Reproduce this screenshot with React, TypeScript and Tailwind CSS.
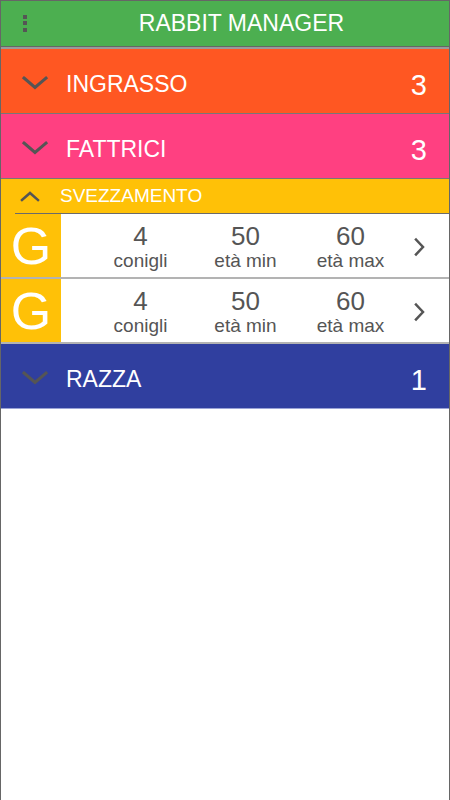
type Section = { title: string; count: number; color: string };

const sections: Section[] = [
  { title: "INGRASSO", count: 3, color: "bg-[#ff5722]" },
  { title: "FATTRICI", count: 3, color: "bg-[#ff4081]" },
];

const rows = [
  { conigli: 4, min: 50, max: 60 },
  { conigli: 4, min: 50, max: 60 },
];

function ChevronDownWide() {
  return (
    <svg width="28" height="16" viewBox="0 0 28 16" fill="none">
      <polyline
        points="3,3 14,12.5 25,3"
        stroke="#555"
        strokeWidth="3"
        strokeLinecap="square"
      />
    </svg>
  );
}

function SectionHeader({ title, count, color }: Section) {
  return (
    <div className={`flex h-[65px] items-center border-b border-[#777] ${color}`}>
      <div className="flex w-[65px] justify-center pl-[3px] pt-[4px]">
        <ChevronDownWide />
      </div>
      <span className="flex-1 pt-[6px] text-[23px] text-white">{title}</span>
      <span className="pr-[22px] pt-[10px] text-[29px] text-white">{count}</span>
    </div>
  );
}

function Stat({ value, label }: { value: number; label: string }) {
  return (
    <div className="flex w-[105px] flex-col items-center leading-none text-[#555]">
      <span className="text-[26px]">{value}</span>
      <span className="mt-[2px] text-[19px]">{label}</span>
    </div>
  );
}

export default function App() {
  return (
    <div
      className="min-h-[800px] border-x border-[#666] bg-white"
      style={{ fontFamily: "'Liberation Sans', Arial, sans-serif" }}
    >
      <div className="flex h-[47px] items-center border-t border-b border-[#666] bg-[#4caf50]">
        <div className="flex w-[48px] flex-col items-center gap-[2.5px] pb-[1px]">
          <span className="h-[4px] w-[4px] bg-[#555]" />
          <span className="h-[4px] w-[4px] bg-[#555]" />
          <span className="h-[4px] w-[4px] bg-[#555]" />
        </div>
        <span className="flex-1 pr-[15px] text-center text-[23px] text-white">
          RABBIT MANAGER
        </span>
      </div>
      <div className="h-[2px] bg-[#9a9a9a]" />

      {sections.map((s) => (
        <SectionHeader key={s.title} {...s} />
      ))}

      <div className="flex h-[34px] items-center bg-[#ffc107]">
        <div className="flex w-[59px] justify-center pr-[2px]">
          <svg width="22" height="12" viewBox="0 0 22 12" fill="none">
            <polyline
              points="3,10 11,3 19,10"
              stroke="#555"
              strokeWidth="2.5"
              strokeLinecap="square"
            />
          </svg>
        </div>
        <span className="text-[19px] text-white">SVEZZAMENTO</span>
      </div>
      <div className="flex h-[1px]">
        <div className="w-[14px] bg-[#ffc107]" />
        <div className="flex-1 bg-[#6a6a6a]" />
      </div>

      {rows.map((r, i) => (
        <div key={i} className="flex h-[65px] border-b-2 border-[#b3b3b3]">
          <div className="flex w-[60px] items-center justify-center bg-[#ffc107] text-[52px] text-white">
            G
          </div>
          <div className="flex flex-1 items-center pl-[27px] pt-[2px]">
            <Stat value={r.conigli} label="conigli" />
            <Stat value={r.min} label="età min" />
            <Stat value={r.max} label="età max" />
            <svg width="12" height="20" viewBox="0 0 12 20" fill="none" className="ml-[10px]">
              <polyline
                points="3,2.5 10,10 3,17.5"
                stroke="#555"
                strokeWidth="2.5"
                strokeLinecap="square"
              />
            </svg>
          </div>
        </div>
      ))}

      <div className="flex h-[65px] items-center border-b border-[#9aa3d6] bg-[#303f9f]">
        <div className="flex w-[65px] justify-center pl-[3px] pt-[4px]">
          <ChevronDownWide />
        </div>
        <span className="flex-1 pt-[6px] text-[23px] text-white">RAZZA</span>
        <span className="pr-[22px] pt-[10px] text-[29px] text-white">1</span>
      </div>
    </div>
  );
}
